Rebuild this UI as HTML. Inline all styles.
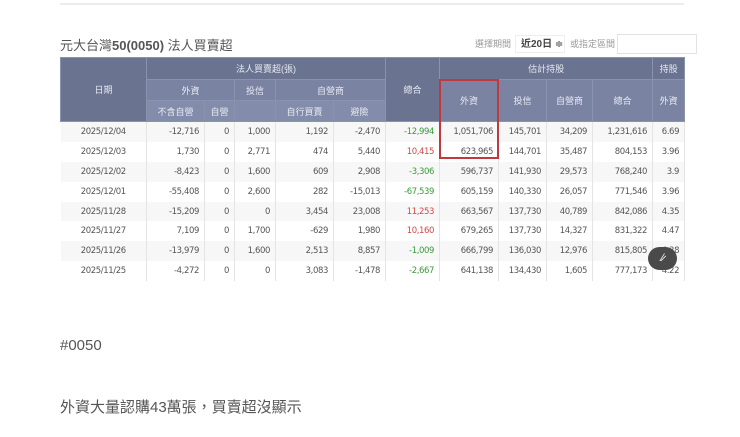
<!DOCTYPE html>
<html><head><meta charset="utf-8"><style>
body{margin:0;width:740px;height:437px;background:#fff;font-family:"Liberation Sans","Noto Sans CJK TC",sans-serif;position:relative;overflow:hidden}
.topline{position:absolute;left:60px;top:3px;width:624px;height:2px;background:#ececec}
.title{position:absolute;left:60px;top:35px;font-size:13px;color:#555}
.ctl{position:absolute;top:37px;font-size:9px;color:#999}
.sel{position:absolute;left:515px;top:35px;width:50px;height:18px;border:1px solid #eee;font-size:10px;color:#444;line-height:18px;padding-left:5px;box-sizing:border-box;font-weight:bold}
.inp{position:absolute;left:617px;top:34px;width:80px;height:20px;border:1px solid #e2e2e2;box-sizing:border-box}
table{position:absolute;left:60px;top:57px;border-collapse:collapse;table-layout:fixed;width:624px;font-size:9px}
th{color:#e8eaf2;font-weight:normal;text-align:center;border:1px solid #8a93ae;padding:0;height:20px}
th.d{background:#6a7390}
th.m{background:#7a83a2}
th.l{background:#838caa}
td{height:19.9px;padding:0 5px 0 0;text-align:right;color:#555;border-right:1px solid #e4e4e4;font-family:"DejaVu Sans","Liberation Sans",sans-serif;font-size:8.5px;letter-spacing:-0.4px}
td.c{text-align:center;padding:0}
tr:nth-child(even) td{background:#f7f7f7}
.g{color:#3a9a3a}.r{color:#d04848}
.box{position:absolute;left:439px;top:79px;width:60px;height:80px;border:2px solid #c0393f;box-sizing:border-box}
.btn{position:absolute;left:648px;top:247px;width:29px;height:23px;border-radius:12px;background:#4a4a4a;color:#fff;font-size:11px;text-align:center;line-height:23px}
.t1{position:absolute;left:60px;top:337px;font-size:15px;color:#555}
.t2{position:absolute;left:60px;top:396px;font-size:15px;color:#555}
</style></head><body>
<div class="topline"></div>
<div class="title">元大台灣<b>50(0050)</b> 法人買賣超</div>
<div class="ctl" style="left:475px">選擇期間</div>
<div class="sel">近20日 <span style="font-weight:normal">≑</span></div>
<div class="ctl" style="left:570px">或指定區間</div>
<div class="inp"></div>
<table>
<colgroup><col style="width:86px"><col style="width:58px"><col style="width:30px"><col style="width:41px"><col style="width:58px"><col style="width:52px"><col style="width:54px"><col style="width:59px"><col style="width:48px"><col style="width:46px"><col style="width:60px"><col style="width:32px"></colgroup>
<tr style="height:22px"><th class="d" rowspan="3">日期</th><th class="d" colspan="5">法人買賣超(張)</th><th class="d" rowspan="3">總合</th><th class="d" colspan="4">估計持股</th><th class="d">持股</th></tr>
<tr style="height:21px"><th class="m" colspan="2">外資</th><th class="m">投信</th><th class="m" colspan="2">自營商</th><th class="m" rowspan="2">外資</th><th class="m" rowspan="2">投信</th><th class="m" rowspan="2">自營商</th><th class="m" rowspan="2">總合</th><th class="m" rowspan="2">外資</th></tr>
<tr style="height:20px"><th class="l">不含自營</th><th class="l">自營</th><th class="l"></th><th class="l">自行買賣</th><th class="l">避險</th></tr>
<tr><td class="c">2025/12/04</td><td>-12,716</td><td>0</td><td>1,000</td><td>1,192</td><td>-2,470</td><td class="g">-12,994</td><td>1,051,706</td><td>145,701</td><td>34,209</td><td>1,231,616</td><td>6.69</td></tr>
<tr><td class="c">2025/12/03</td><td>1,730</td><td>0</td><td>2,771</td><td>474</td><td>5,440</td><td class="r">10,415</td><td>623,965</td><td>144,701</td><td>35,487</td><td>804,153</td><td>3.96</td></tr>
<tr><td class="c">2025/12/02</td><td>-8,423</td><td>0</td><td>1,600</td><td>609</td><td>2,908</td><td class="g">-3,306</td><td>596,737</td><td>141,930</td><td>29,573</td><td>768,240</td><td>3.9</td></tr>
<tr><td class="c">2025/12/01</td><td>-55,408</td><td>0</td><td>2,600</td><td>282</td><td>-15,013</td><td class="g">-67,539</td><td>605,159</td><td>140,330</td><td>26,057</td><td>771,546</td><td>3.96</td></tr>
<tr><td class="c">2025/11/28</td><td>-15,209</td><td>0</td><td>0</td><td>3,454</td><td>23,008</td><td class="r">11,253</td><td>663,567</td><td>137,730</td><td>40,789</td><td>842,086</td><td>4.35</td></tr>
<tr><td class="c">2025/11/27</td><td>7,109</td><td>0</td><td>1,700</td><td>-629</td><td>1,980</td><td class="r">10,160</td><td>679,265</td><td>137,730</td><td>14,327</td><td>831,322</td><td>4.47</td></tr>
<tr><td class="c">2025/11/26</td><td>-13,979</td><td>0</td><td>1,600</td><td>2,513</td><td>8,857</td><td class="g">-1,009</td><td>666,799</td><td>136,030</td><td>12,976</td><td>815,805</td><td>4.38</td></tr>
<tr><td class="c">2025/11/25</td><td>-4,272</td><td>0</td><td>0</td><td>3,083</td><td>-1,478</td><td class="g">-2,667</td><td>641,138</td><td>134,430</td><td>1,605</td><td>777,173</td><td>4.22</td></tr>
</table>
<div class="box"></div>
<div class="btn">⁄̷</div>
<div class="t1">#0050</div>
<div class="t2">外資大量認購43萬張，買賣超沒顯示</div>
</body></html>
